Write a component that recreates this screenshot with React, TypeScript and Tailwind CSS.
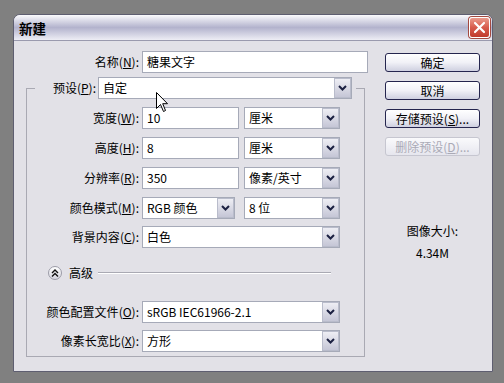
import React from "react";

const FONT = '"Noto Sans CJK SC", "Noto Sans", sans-serif';

function Chevron() {
  return (
    <svg width="9" height="6" viewBox="0 0 9 6">
      <path d="M1 1 L4.5 4.5 L8 1" stroke="#1c2142" strokeWidth="2" fill="none" />
    </svg>
  );
}

function Field({ value, w }: { value: string; w: string }) {
  return (
    <div className={`${w} h-[22px] border border-[#a6aab8] bg-white flex items-center pl-[4px] text-black`}>
      {value}
    </div>
  );
}

function Select({ value, w }: { value: string; w: string }) {
  return (
    <div className={`${w} h-[22px] border border-[#a6aab8] bg-white flex items-stretch text-black`}>
      <div className="flex-1 flex items-center pl-[4px]">{value}</div>
      <div className="w-[17px] border border-[#b9bccb] bg-gradient-to-b from-[#eeeef4] to-[#c5c6d6] flex items-center justify-center">
        <Chevron />
      </div>
    </div>
  );
}

function Label({ text, k, w }: { text: string; k: string; w: string }) {
  return (
    <div className={`${w} text-right whitespace-nowrap text-black`}>
      {text}(<span className="underline">{k}</span>):
    </div>
  );
}

function Btn({ children, disabled }: { children: React.ReactNode; disabled?: boolean }) {
  return (
    <div
      className={
        disabled
          ? "w-[95px] h-[19px] rounded-[3px] border border-[#c6c6d0] bg-gradient-to-b from-[#fafafc] to-[#e6e6ee] flex items-center justify-center text-[#aaaab6]"
          : "w-[95px] h-[19px] rounded-[3px] border border-[#25254e] bg-gradient-to-b from-white via-[#f1f1f7] to-[#cfd0e0] flex items-center justify-center text-black"
      }
    >
      {children}
    </div>
  );
}

export default function App() {
  return (
    <div
      className="relative w-[504px] h-[383px] bg-[#808080] pl-[13px] pt-[14px] text-[12px] leading-[16px]"
      style={{ fontFamily: FONT }}
    >
      <div className="w-[480px] h-[358px] rounded-t-[7px] border border-[#5e5e70] bg-[#e2e1e7] flex flex-col overflow-hidden">
        {/* title bar */}
        <div className="h-[26px] shrink-0 bg-gradient-to-b from-[#fbfbfd] via-[#b3b3cd] to-[#eeeef5] flex items-center justify-between pl-[5px] pr-[2px] border-b border-[#9a9aae]">
          <div className="text-[13.5px] font-bold text-black tracking-[0px]">新建</div>
          <div className="w-[21px] h-[21px] rounded-[3px] border border-white bg-gradient-to-b from-[#ea9a8c] via-[#d75b4c] to-[#c03a2c] flex items-center justify-center shadow-[0_0_0_1px_#a44a40]">
            <svg width="13" height="13" viewBox="0 0 13 13">
              <path d="M2 2 L11 11 M11 2 L2 11" stroke="white" strokeWidth="2.2" strokeLinecap="round" />
            </svg>
          </div>
        </div>

        {/* body */}
        <div className="flex flex-1">
          {/* left column */}
          <div className="w-[355px] flex flex-col">
            <div className="flex items-center mt-[10px]">
              <Label text="名称" k="N" w="w-[125px]" />
              <div className="ml-[3px]">
                <Field value="糖果文字" w="w-[226px]" />
              </div>
            </div>

            <fieldset className="ml-[12px] mt-[4px] w-[339px] border border-[#a9a9b3] pb-[4px]">
              <legend className="ml-[8px] pr-[4px]">
                <div className="flex items-center h-[22px]">
                  <Label text="预设" k="P" w="w-[61px]" />
                  <div className="ml-[2px]">
                    <Select value="自定" w="w-[254px]" />
                  </div>
                </div>
              </legend>

              <div className="flex flex-col">
                <div className="flex items-center mt-[8px]">
                  <Label text="宽度" k="W" w="w-[112px]" />
                  <div className="ml-[3px] flex gap-[5px]">
                    <Field value="10" w="w-[97px]" />
                    <Select value="厘米" w="w-[96px]" />
                  </div>
                </div>
                <div className="flex items-center mt-[8px]">
                  <Label text="高度" k="H" w="w-[112px]" />
                  <div className="ml-[3px] flex gap-[5px]">
                    <Field value="8" w="w-[97px]" />
                    <Select value="厘米" w="w-[96px]" />
                  </div>
                </div>
                <div className="flex items-center mt-[8px]">
                  <Label text="分辨率" k="R" w="w-[112px]" />
                  <div className="ml-[3px] flex gap-[5px]">
                    <Field value="350" w="w-[97px]" />
                    <Select value="像素/英寸" w="w-[96px]" />
                  </div>
                </div>
                <div className="flex items-center mt-[8px]">
                  <Label text="颜色模式" k="M" w="w-[112px]" />
                  <div className="ml-[3px] flex gap-[9px]">
                    <Select value="RGB 颜色" w="w-[93px]" />
                    <Select value="8 位" w="w-[96px]" />
                  </div>
                </div>
                <div className="flex items-center mt-[7px]">
                  <Label text="背景内容" k="C" w="w-[112px]" />
                  <div className="ml-[3px]">
                    <Select value="白色" w="w-[198px]" />
                  </div>
                </div>

                <div className="flex items-center h-[14px] mt-[18px]">
                  <div className="ml-[21px] w-[14px] h-[14px] rounded-full border border-[#9c9ca8] bg-gradient-to-b from-white to-[#d6d6e0] flex items-center justify-center">
                    <svg width="8" height="8" viewBox="0 0 8 8">
                      <path d="M1 4 L4 1 L7 4 M1 7.5 L4 4.5 L7 7.5" stroke="#111" strokeWidth="1.4" fill="none" />
                    </svg>
                  </div>
                  <div className="ml-[7px] text-black">高级</div>
                  <div className="ml-[5px] mr-[33px] flex-1 h-[2px] border-t border-[#a9a9b3] border-b border-b-white" />
                </div>

                <div className="flex items-center mt-[21px]">
                  <Label text="颜色配置文件" k="O" w="w-[112px]" />
                  <div className="ml-[3px]">
                    <Select value="sRGB IEC61966-2.1" w="w-[198px]" />
                  </div>
                </div>
                <div className="flex items-center mt-[7px]">
                  <Label text="像素长宽比" k="X" w="w-[112px]" />
                  <div className="ml-[3px]">
                    <Select value="方形" w="w-[198px]" />
                  </div>
                </div>
              </div>
            </fieldset>
          </div>

          {/* right column */}
          <div className="ml-[16px] w-[95px] flex flex-col items-center">
            <div className="mt-[12px] flex flex-col gap-[9px]">
              <Btn>确定</Btn>
              <Btn>取消</Btn>
              <Btn>
                <span>
                  存储预设(<span className="underline">S</span>)...
                </span>
              </Btn>
              <Btn disabled>
                <span>
                  删除预设(<span className="underline">D</span>)...
                </span>
              </Btn>
            </div>
            <div className="mt-[67px] text-black">图像大小:</div>
            <div className="mt-[6px] text-black">4.34M</div>
          </div>
        </div>
      </div>

      {/* mouse cursor overlay */}
      <svg className="absolute left-[156px] top-[92px]" width="13" height="21" viewBox="0 0 13 21">
        <path d="M0.5 0.5 L0.5 16.5 L4.5 12.5 L7.5 19.5 L9.5 18.5 L6.7 11.7 L11.5 11.7 Z" fill="white" stroke="black" strokeWidth="1" />
      </svg>
    </div>
  );
}
